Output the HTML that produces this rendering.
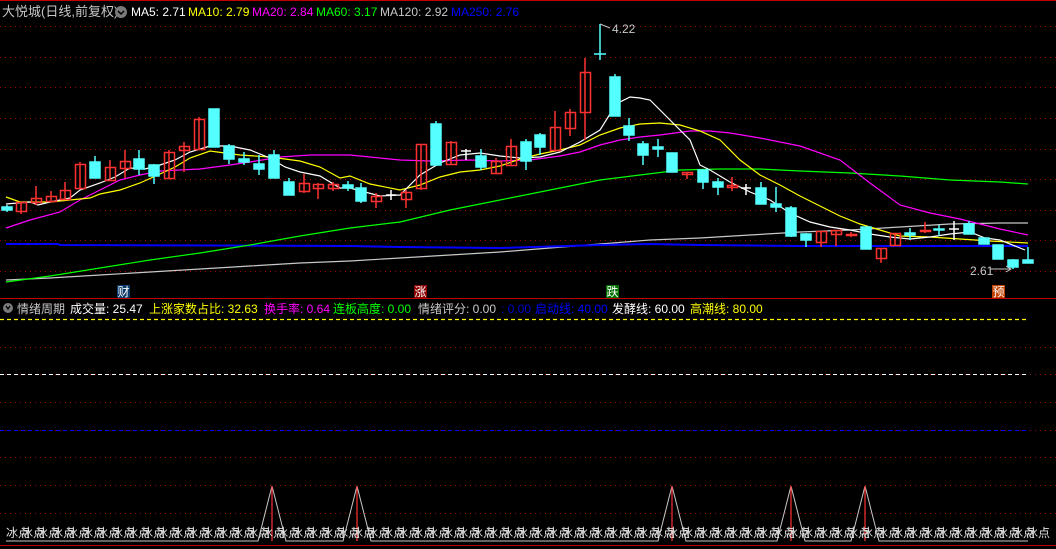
<!DOCTYPE html>
<html><head><meta charset="utf-8"><style>
html,body{margin:0;padding:0;background:#000;}
body{width:1056px;height:549px;overflow:hidden;position:relative;font-family:"Liberation Sans","Noto Sans CJK SC",sans-serif;}
svg{position:absolute;left:0;top:0}
</style></head><body>
<svg width="1056" height="549" viewBox="0 0 1056 549" xmlns="http://www.w3.org/2000/svg" font-family="Liberation Sans, Noto Sans CJK SC, sans-serif" font-size="12">
<rect width="1056" height="549" fill="#000"/>
<line x1="0" y1="0.5" x2="1056" y2="0.5" stroke="#c00000"/>
<g stroke="#a00000" stroke-dasharray="1,4">
<line x1="0" y1="26.5" x2="1056" y2="26.5"/><line x1="0" y1="57.5" x2="1056" y2="57.5"/>
<line x1="0" y1="87.5" x2="1056" y2="87.5"/><line x1="0" y1="118.5" x2="1056" y2="118.5"/>
<line x1="0" y1="149.5" x2="1056" y2="149.5"/><line x1="0" y1="179.5" x2="1056" y2="179.5"/>
<line x1="0" y1="210.5" x2="1056" y2="210.5"/><line x1="0" y1="240.5" x2="1056" y2="240.5"/>
<line x1="0" y1="271.5" x2="1056" y2="271.5"/>
<line x1="0" y1="347.5" x2="1056" y2="347.5"/><line x1="0" y1="374.5" x2="1056" y2="374.5"/>
<line x1="0" y1="402.5" x2="1056" y2="402.5"/><line x1="0" y1="430.5" x2="1056" y2="430.5"/>
<line x1="0" y1="457.5" x2="1056" y2="457.5"/><line x1="0" y1="485.5" x2="1056" y2="485.5"/>
<line x1="0" y1="513.5" x2="1056" y2="513.5"/>
</g>
<line x1="0" y1="298.5" x2="1056" y2="298.5" stroke="#c00000"/>
<line x1="0" y1="545.5" x2="1056" y2="545.5" stroke="#c00000"/>

<g fill="none" stroke-width="1.2">
<polyline stroke="#c8c8c8" points="6,280 50,278 100,275 150,272 200,269 250,266 300,263 350,261 400,258 450,255 500,252 550,248 600,244 650,240 700,238 750,235 800,232 850,230 900,227 950,224 1000,223 1028,223"/>
<polyline stroke="#0000ff" stroke-width="2" points="6,244 58,244 60,245 350,246 400,247 500,248 600,245 650,244 700,245 800,246 1028,246"/>
<polyline stroke="#00ff00" points="6,282 50,276 100,268 150,260 200,253 250,245 300,236 350,228 400,222 450,210 500,200 550,190 600,180 640,175 680,170 720,169 760,169 800,171 850,173 900,176 950,180 1000,182 1028,184"/>
<polyline stroke="#ff00ff" points="6,228 30,220 60,212 80,200 100,190 120,180 140,175 160,171 200,169 230,165 250,162 280,157 310,155 350,155 370,157 400,160 430,161 470,160 500,161 530,160 560,156 580,152 600,145 620,140 640,137 660,135 690,131 710,131 730,133 760,138 800,146 840,160 870,183 900,205 930,213 960,219 1000,229 1028,235"/>
<polyline stroke="#ffff00" points="6,197 20,202 50,202 70,200 90,198 100,194 120,190 140,183 160,174 175,167 190,158 210,151 240,155 270,157 300,161 320,167 340,178 350,176 370,184 400,190 420,185 440,177 460,172 480,170 500,166 520,159 540,154 560,150 580,145 600,135 620,128 640,124 660,123 680,125 700,131 720,140 740,160 760,175 780,185 800,196 820,206 840,216 860,224 880,230 900,236 930,237 960,239 990,241 1028,243"/>
<polyline stroke="#ffffff" points="6,204 30,202 38,205 50,202 70,198 80,190 100,183 115,177 130,168 145,169 160,165 175,160 190,152 210,146 230,146 250,150 270,158 285,167 300,172 320,176 340,188 350,188 380,196 400,195 410,185 420,175 440,163 460,155 480,153 500,156 520,158 540,157 560,152 580,142 600,130 610,114 620,102 630,97 640,98 650,100 660,110 670,120 680,130 690,140 700,165 710,170 730,182 750,192 770,200 790,213 810,222 830,227 850,230 870,234 890,237 910,239 930,237 950,234 970,232 985,238 1000,240 1025,250"/>
</g>

<g stroke-width="1.5">
<g fill="#54ffff" stroke="#54ffff">
<line x1="7" y1="205" x2="7" y2="212"/><rect x="2" y="207" width="10" height="3"/>
<line x1="95" y1="156" x2="95" y2="178"/><rect x="90" y="162" width="10" height="16"/>
<line x1="139" y1="150" x2="139" y2="175"/><rect x="134" y="159" width="10" height="10"/>
<line x1="154" y1="164" x2="154" y2="184"/><rect x="149" y="165" width="10" height="11"/>
<rect x="209" y="109" width="10" height="38"/>
<line x1="229" y1="144" x2="229" y2="164"/><rect x="224" y="146" width="10" height="13"/>
<line x1="244" y1="152" x2="244" y2="165"/><rect x="239" y="159" width="10" height="3"/>
<line x1="259" y1="155" x2="259" y2="175"/><rect x="254" y="164" width="10" height="5"/>
<line x1="274" y1="150" x2="274" y2="178"/><rect x="269" y="155" width="10" height="23"/>
<line x1="289" y1="178" x2="289" y2="195"/><rect x="284" y="182" width="10" height="13"/>
<line x1="348" y1="181" x2="348" y2="191"/><rect x="343" y="185" width="10" height="3"/>
<line x1="361" y1="183" x2="361" y2="203"/><rect x="356" y="188" width="10" height="13"/>
<line x1="436" y1="121" x2="436" y2="165"/><rect x="431" y="124" width="10" height="41"/>
<line x1="481" y1="149" x2="481" y2="170"/><rect x="476" y="156" width="10" height="11"/>
<line x1="526" y1="139" x2="526" y2="170"/><rect x="521" y="142" width="10" height="19"/>
<line x1="540" y1="133" x2="540" y2="155"/><rect x="535" y="135" width="10" height="12"/>
<line x1="600" y1="24" x2="600" y2="60"/><line x1="594" y1="54" x2="606" y2="54"/>
<line x1="615" y1="74" x2="615" y2="116"/><rect x="610" y="77" width="10" height="39"/>
<line x1="629" y1="118" x2="629" y2="141"/><rect x="624" y="126" width="10" height="9"/>
<line x1="643" y1="141" x2="643" y2="165"/><rect x="638" y="144" width="10" height="11"/>
<line x1="658" y1="139" x2="658" y2="157"/><rect x="653" y="147" width="10" height="2"/>
<rect x="667" y="153" width="10" height="19"/>
<line x1="703" y1="170" x2="703" y2="189"/><rect x="698" y="170" width="10" height="12"/>
<line x1="718" y1="178" x2="718" y2="195"/><rect x="713" y="182" width="10" height="5"/>
<line x1="761" y1="182" x2="761" y2="204"/><rect x="756" y="188" width="10" height="16"/>
<line x1="776" y1="187" x2="776" y2="212"/><rect x="771" y="204" width="10" height="3"/>
<line x1="791" y1="206" x2="791" y2="237"/><rect x="786" y="208" width="10" height="28"/>
<line x1="806" y1="233" x2="806" y2="247"/><rect x="801" y="234" width="10" height="6"/>
<rect x="861" y="227" width="10" height="22"/>
<line x1="910" y1="228" x2="910" y2="240"/><rect x="905" y="233" width="10" height="2"/>
<line x1="939" y1="225" x2="939" y2="236"/><rect x="934" y="229" width="10" height="1"/>
<line x1="969" y1="221" x2="969" y2="234"/><rect x="964" y="224" width="10" height="10"/>
<rect x="979" y="238" width="10" height="6"/>
<rect x="993" y="245" width="10" height="14"/>
<line x1="1013" y1="259" x2="1013" y2="269"/><rect x="1008" y="260" width="10" height="7"/>
<line x1="1028" y1="247" x2="1028" y2="263"/><rect x="1023" y="260" width="10" height="3"/>
</g>
<g fill="none" stroke="#ff3232">
<line x1="21" y1="202" x2="21" y2="214"/><rect x="16.5" y="202.5" width="10" height="9"/>
<line x1="36" y1="186" x2="36" y2="205"/><rect x="31.5" y="198.5" width="10" height="4"/>
<line x1="51" y1="191" x2="51" y2="201"/><rect x="46.5" y="196.5" width="10" height="5"/>
<line x1="65" y1="182" x2="65" y2="199"/><rect x="60.5" y="190.5" width="10" height="9"/>
<line x1="80" y1="162" x2="80" y2="188"/><rect x="75.5" y="164.5" width="10" height="24"/>
<line x1="110" y1="160" x2="110" y2="180"/><rect x="105.5" y="167.5" width="10" height="13"/>
<line x1="125" y1="150" x2="125" y2="178"/><rect x="120.5" y="161.5" width="10" height="7"/>
<line x1="169" y1="150" x2="169" y2="178"/><rect x="164.5" y="152.5" width="10" height="26"/>
<line x1="184" y1="142" x2="184" y2="172"/><rect x="179.5" y="146.5" width="10" height="4"/>
<line x1="199" y1="117" x2="199" y2="149"/><rect x="194.5" y="119.5" width="10" height="30"/>
<line x1="304" y1="174" x2="304" y2="193"/><rect x="299.5" y="183.5" width="10" height="8"/>
<line x1="318" y1="183" x2="318" y2="199"/><rect x="313.5" y="184.5" width="10" height="4"/>
<line x1="333" y1="182" x2="333" y2="191"/><rect x="328.5" y="184.5" width="10" height="4"/>
<line x1="376" y1="193" x2="376" y2="208"/><rect x="371.5" y="196.5" width="10" height="5"/>
<line x1="406" y1="190" x2="406" y2="208"/><rect x="401.5" y="192.5" width="10" height="7"/>
<line x1="421" y1="144" x2="421" y2="190"/><rect x="416.5" y="144.5" width="10" height="44"/>
<line x1="451" y1="141" x2="451" y2="165"/><rect x="446.5" y="142.5" width="10" height="22"/>
<line x1="496" y1="158" x2="496" y2="174"/><rect x="491.5" y="161.5" width="10" height="12"/>
<line x1="511" y1="139" x2="511" y2="165"/><rect x="506.5" y="146.5" width="10" height="19"/>
<line x1="555" y1="111" x2="555" y2="150"/><rect x="550.5" y="127.5" width="10" height="23"/>
<line x1="570" y1="109" x2="570" y2="136"/><rect x="565.5" y="112.5" width="10" height="16"/>
<line x1="585" y1="58" x2="585" y2="140"/><rect x="580.5" y="72.5" width="10" height="40"/>
<line x1="687" y1="172" x2="687" y2="179"/><rect x="682.5" y="172.5" width="10" height="2"/>
<line x1="732" y1="177" x2="732" y2="191"/><rect x="727.5" y="185.5" width="10" height="2"/>
<line x1="821" y1="231" x2="821" y2="247"/><rect x="816.5" y="231.5" width="10" height="11"/>
<line x1="836" y1="230" x2="836" y2="246"/><rect x="831.5" y="230.5" width="10" height="4"/>
<line x1="851" y1="232" x2="851" y2="237"/><rect x="846.5" y="234.5" width="10" height="1"/>
<line x1="881" y1="248" x2="881" y2="263"/><rect x="876.5" y="248.5" width="10" height="10"/>
<line x1="895" y1="233" x2="895" y2="246"/><rect x="890.5" y="233.5" width="10" height="12"/>
<line x1="925" y1="222" x2="925" y2="233"/><rect x="920.5" y="230.5" width="10" height="1"/>
</g>
<g stroke="#ffffff">
<line x1="391" y1="190" x2="391" y2="200"/><line x1="386" y1="195" x2="396" y2="195"/>
<line x1="466" y1="149" x2="466" y2="160"/><line x1="461" y1="151" x2="471" y2="151"/>
<line x1="746" y1="184" x2="746" y2="195"/><line x1="741" y1="188" x2="751" y2="188"/>
<line x1="954" y1="221" x2="954" y2="240"/><line x1="949" y1="229" x2="959" y2="229"/>
</g>
</g>

<line x1="600" y1="24" x2="610" y2="28" stroke="#c8c8c8"/>
<text x="612" y="33" fill="#c8c8c8">4.22</text>
<text x="970" y="275" fill="#c8c8c8">2.61</text>
<line x1="990" y1="269" x2="1010" y2="269" stroke="#c8c8c8"/><path d="M1006,266 L1011,269 L1006,272" stroke="#c8c8c8" fill="none"/>
<rect x="117" y="285" width="13" height="13" fill="#0a3a6a"/><text x="117.5" y="296" fill="#fff">财</text>
<rect x="414" y="285" width="13" height="13" fill="#8a0000"/><text x="414.5" y="296" fill="#fff">涨</text>
<rect x="606" y="285" width="13" height="13" fill="#007000"/><text x="606.5" y="296" fill="#fff">跌</text>
<rect x="992" y="285" width="13" height="13" fill="#c04000"/><text x="992.5" y="296" fill="#fff">预</text>

<text x="2" y="16" fill="#c8c8c8" font-size="13">大悦城(日线,前复权)</text>
<circle cx="121" cy="12" r="6" fill="#7a7a7a"/><path d="M118,11 L121,14 L124,11" stroke="#000" fill="none" stroke-width="1.5"/>
<text x="131" y="16" fill="#fff">MA5: 2.71</text>
<text x="188" y="16" fill="#ffff00">MA10: 2.79</text>
<text x="252" y="16" fill="#ff00ff">MA20: 2.84</text>
<text x="316" y="16" fill="#00ff00">MA60: 3.17</text>
<text x="380" y="16" fill="#c8c8c8">MA120: 2.92</text>
<text x="451" y="16" fill="#0000ff">MA250: 2.76</text>

<circle cx="8" cy="308" r="5" fill="#7a7a7a"/><path d="M6,306 L8,309 L10,306" stroke="#000" fill="none" stroke-width="1.3"/>
<text x="17" y="313" fill="#c8c8c8">情绪周期</text>
<text x="70" y="313" fill="#fff">成交量: 25.47</text>
<text x="149" y="313" fill="#ffff00">上涨家数占比: 32.63</text>
<text x="264" y="313" fill="#ff00ff">换手率: 0.64</text>
<text x="333" y="313" fill="#00ff00">连板高度: 0.00</text>
<text x="418" y="313" fill="#c8c8c8">情绪评分: 0.00</text>
<text x="501" y="313" fill="#0000cc">: 0.00</text>
<text x="535" y="313" fill="#0000ff">启动线: 40.00</text>
<text x="612" y="313" fill="#fff">发酵线: 60.00</text>
<text x="690" y="313" fill="#ffff00">高潮线: 80.00</text>

<line x1="0" y1="319.5" x2="1028" y2="319.5" stroke="#ffff00" stroke-width="1.3" stroke-dasharray="4,3"/>
<line x1="0" y1="374.5" x2="1028" y2="374.5" stroke="#ffffff" stroke-dasharray="4,3"/>
<line x1="0" y1="430.5" x2="1028" y2="430.5" stroke="#0000ff" stroke-dasharray="4,3"/>
<polyline fill="none" stroke="#c8c8c8" points="6,541 258,541 272,486 286,541 343,541 357,486 371,541 658,541 672,486 686,541 777,541 791,486 805,541 851,541 865,486 879,541 1028,541"/>
<g stroke="#ff3232" stroke-width="1.2">
<line x1="272" y1="486" x2="272" y2="541"/><line x1="357" y1="486" x2="357" y2="541"/>
<line x1="672" y1="486" x2="672" y2="541"/><line x1="791" y1="486" x2="791" y2="541"/>
<line x1="865" y1="486" x2="865" y2="541"/>
</g>
<text y="537" fill="#e0e0e0" font-size="12" x="6 18 21 33 36 48 51 63 66 78 81 93 96 108 111 123 126 138 141 153 156 168 171 183 186 198 201 213 216 228 231 243 246 258 261 273 276 288 291 303 306 318 321 333 336 348 351 363 366 378 381 393 396 408 411 423 426 438 441 453 456 468 471 483 486 498 501 513 516 528 531 543 546 558 561 573 576 588 591 603 606 618 621 633 636 648 651 663 666 678 681 693 696 708 711 723 726 738 741 753 756 768 771 783 786 798 801 813 816 828 831 843 846 858 861 873 876 888 891 903 906 918 921 933 936 948 951 963 966 978 981 993 996 1008 1011 1023 1026 1038">冰点冰点冰点冰点冰点冰点冰点冰点冰点冰点冰点冰点冰点冰点冰点冰点冰点冰点冰点冰点冰点冰点冰点冰点冰点冰点冰点冰点冰点冰点冰点冰点冰点冰点冰点冰点冰点冰点冰点冰点冰点冰点冰点冰点冰点冰点冰点冰点冰点冰点冰点冰点冰点冰点冰点冰点冰点冰点冰点冰点冰点冰点冰点冰点冰点冰点冰点冰点冰点</text>
</svg>
</body></html>
